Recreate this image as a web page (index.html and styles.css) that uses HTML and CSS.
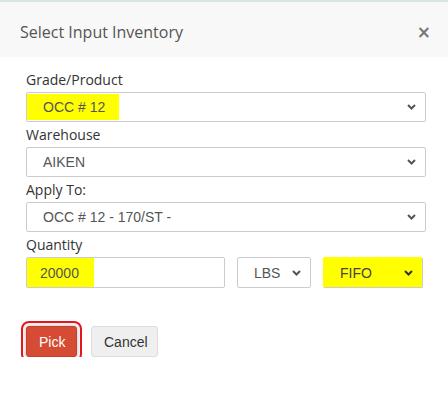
FILE: index.html
```html
<!DOCTYPE html>
<html lang="en">
  <head>
    <meta charset="UTF-8" />
    <meta name="viewport" content="width=device-width, initial-scale=1.0" />
    <title>Select Input Inventory</title>
    <link rel="stylesheet" href="styles.css">
  </head>
  <body>
    <div class="modal">
      <div class="modal-header">
        <span class="modal-title">Select Input Inventory</span>
        <span class="close">&times;</span>
      </div>

      <div class="modal-body">
        <label class="label">Grade/Product</label>
        <div class="field">
          <span class="value mark mark-grade">OCC # 12</span>
          <svg class="chev" width="9" height="6" viewBox="0 0 9 6"><path d="M1 1l3.5 3.5L8 1" fill="none" stroke="#555" stroke-width="2"/></svg>
        </div>

        <label class="label">Warehouse</label>
        <div class="field">
          <span class="value">AIKEN</span>
          <svg class="chev" width="9" height="6" viewBox="0 0 9 6"><path d="M1 1l3.5 3.5L8 1" fill="none" stroke="#555" stroke-width="2"/></svg>
        </div>

        <label class="label">Apply To:</label>
        <div class="field">
          <span class="value">OCC # 12 - 170/ST -</span>
          <svg class="chev" width="9" height="6" viewBox="0 0 9 6"><path d="M1 1l3.5 3.5L8 1" fill="none" stroke="#555" stroke-width="2"/></svg>
        </div>

        <label class="label">Quantity</label>
        <div class="qty-row">
          <div class="field qty">
            <span class="value mark mark-qty">20000</span>
          </div>
          <div class="field unit">
            <span class="value">LBS</span>
            <svg class="chev" width="9" height="6" viewBox="0 0 9 6"><path d="M1 1l3.5 3.5L8 1" fill="none" stroke="#555" stroke-width="2"/></svg>
          </div>
          <div class="field method">
            <span class="value">FIFO</span>
            <svg class="chev" width="9" height="6" viewBox="0 0 9 6"><path d="M1 1l3.5 3.5L8 1" fill="none" stroke="#333" stroke-width="2"/></svg>
          </div>
        </div>

        <div class="actions">
          <button class="btn btn-pick">Pick</button>
          <button class="btn btn-cancel">Cancel</button>
        </div>
      </div>
    </div>
  </body>
</html>
```

FILE: styles.css
```css
body {
  margin: 0;
  background-color: #fff;
  font-family: "Open Sans", sans-serif;
}
.modal {
  border-top: 2px solid #d9e4e0;
}
.modal-header {
  display: flex;
  justify-content: space-between;
  align-items: center;
  height: 55px;
  padding: 5px 17px 0 20px;
  box-sizing: border-box;
  background-color: #f8f8f8;
}
.modal-title {
  font-size: 16px;
  color: #555;
}
.close {
  font-family: "DejaVu Sans", sans-serif;
  font-size: 17px;
  font-weight: bold;
  color: #777;
}
.modal-body {
  padding: 13px 22px 0 26px;
}
.label {
  display: block;
  font-size: 14px;
  line-height: 20px;
  color: #333;
  margin-bottom: 2px;
}
.field {
  display: flex;
  align-items: stretch;
  justify-content: space-between;
  height: 30px;
  border: 1px solid #ccc;
  border-radius: 2px;
  box-sizing: border-box;
  margin-bottom: 3px;
  font-family: "Liberation Sans", Arial, sans-serif;
  font-size: 14px;
  color: #555;
}
.value {
  display: flex;
  align-items: center;
  padding-left: 16px;
}
.chev {
  align-self: center;
  margin-right: 9px;
}
.mark {
  background-color: #ffff00;
  color: #555;
  margin-top: 1px;
  margin-bottom: 1px;
}
.mark-grade {
  width: 76px;
}
.mark-qty {
  width: 54px;
  padding-left: 13px;
  margin: 0;
}
.qty-row {
  display: flex;
  gap: 12px;
}
.qty-row .field {
  height: 31px;
}
.qty {
  width: 199px;
}
.unit {
  width: 74px;
}
.method {
  width: 100px;
  background-color: #ffff00;
  border-color: #ffff00 #ccc #ccc #ffff00;
  color: #444;
}
.actions {
  display: flex;
  gap: 14px;
  margin-top: 35px;
}
.btn {
  height: 31px;
  padding: 0 12px;
  font-family: "Liberation Sans", Arial, sans-serif;
  font-size: 14px;
  border-radius: 3px;
}
.btn-pick {
  width: 51px;
  background-color: #d54b33;
  border: 1px solid #c4412a;
  color: #fff;
  outline: 2px solid #e8141b;
  outline-offset: 3px;
  box-shadow: 0 0 5px rgba(0, 0, 0, 0.3);
}
.btn-cancel {
  width: 67px;
  background-color: #efefef;
  border: 1px solid #ddd;
  color: #333;
}
```
